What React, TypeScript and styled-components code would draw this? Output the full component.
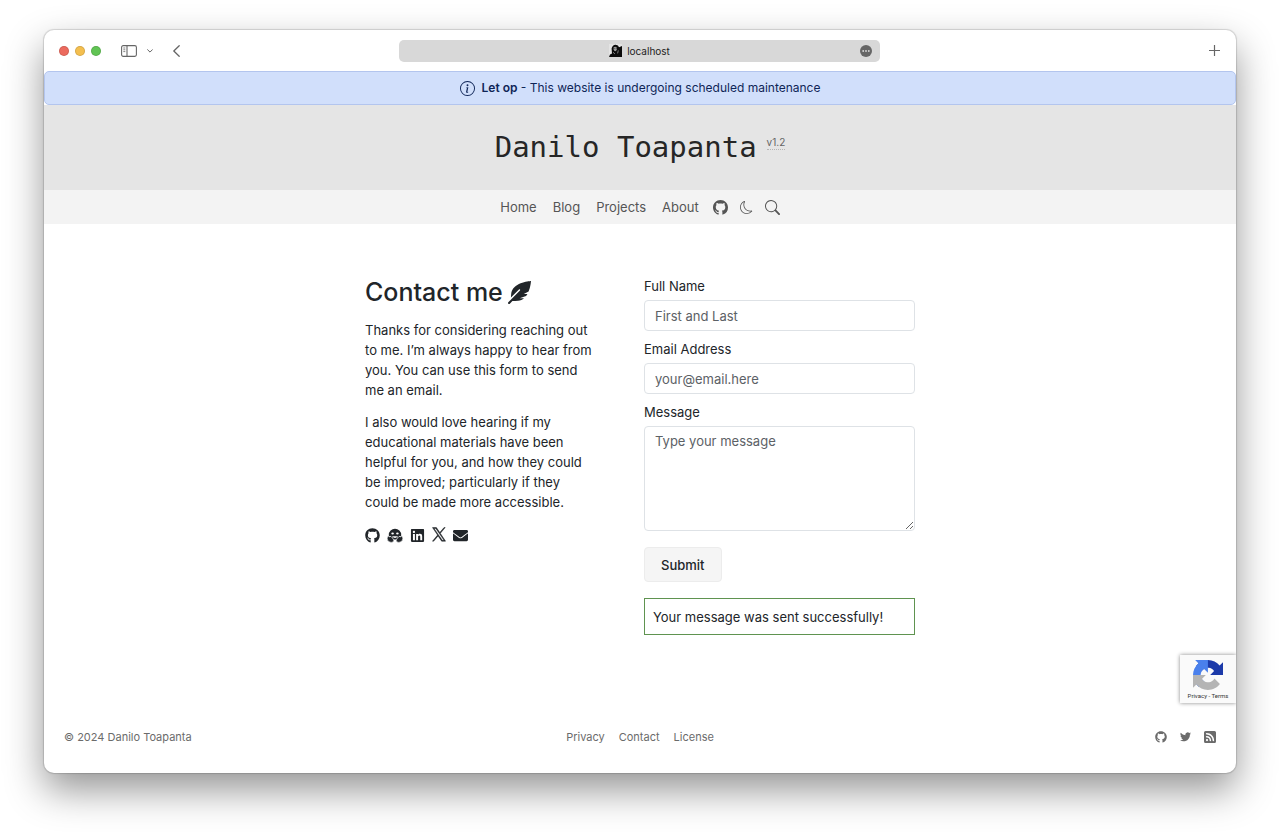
import React from "react";
import styled, { createGlobalStyle } from "styled-components";
import {
  BsGithub,
  BsInfoCircle,
  BsMoon,
  BsRssFill,
  BsSearch,
  BsTwitter,
} from "react-icons/bs";
import { FaEnvelope, FaFeatherAlt, FaGithub, FaLinkedin } from "react-icons/fa";

const GlobalStyle = createGlobalStyle`
  *, *::before, *::after { box-sizing: border-box; }
  body {
    margin: 0;
    background: #fff;
    color: #212529;
    font-family: Inter, "Liberation Sans", sans-serif;
    font-size: 13px;
    line-height: 20px;
  }
  h1, h2, p { margin: 0; font-weight: 400; }
  a { color: inherit; text-decoration: none; }
  button, input, textarea { font: inherit; color: inherit; }
  svg { display: block; }
`;

const Desktop = styled.div`
  display: flex;
  min-height: 100vh;
  padding: 30px 44px 59px;
`;

const Window = styled.div`
  position: relative;
  flex: 1;
  min-width: 0;
  display: flex;
  flex-direction: column;
  overflow: hidden;
  border-radius: 10px;
  background: #fff;
  box-shadow: 0 0 1px 1px rgba(0, 0, 0, 0.14), 0 17px 38px rgba(0, 0, 0, 0.42);
`;

const Toolbar = styled.div`
  display: grid;
  grid-template-columns: 1fr 481px 1fr;
  align-items: center;
  height: 41px;
  padding: 0 16px 0 15px;
  color: #666;
`;

const ToolbarGroup = styled.div`
  display: flex;
  align-items: center;
`;

const Lights = styled.div`
  display: flex;
  gap: 6px;
  margin-right: 20px;
`;

const Light = styled.span<{ $color: string }>`
  width: 10px;
  height: 10px;
  border-radius: 50%;
  border: 1px solid rgba(0, 0, 0, 0.12);
  background: ${(p) => p.$color};
`;

const ToolButton = styled.button<{ $left?: number }>`
  display: flex;
  padding: 0;
  margin-left: ${(p) => p.$left ?? 0}px;
  border: 0;
  background: none;
  color: #666;
`;

const EndButton = styled(ToolButton)`
  justify-self: end;
`;

const AddressBar = styled.div`
  display: grid;
  grid-template-columns: 1fr auto 1fr;
  align-items: center;
  height: 22px;
  padding: 0 8px;
  border-radius: 5px;
  background: #d8d8d8;
  color: #1d1d1d;
  font-size: 10px;
  line-height: 16px;
`;

const Address = styled.span`
  grid-column: 2;
  display: flex;
  align-items: center;
  gap: 5px;
`;

const Notice = styled.div`
  display: flex;
  align-items: center;
  justify-content: center;
  gap: 7px;
  height: 34px;
  border: 1px solid #b3c5ee;
  border-radius: 5px;
  background: #d1dffb;
  color: #0f2557;
  font-size: 12px;

  b { font-weight: 600; }
`;

const Banner = styled.header`
  display: flex;
  justify-content: center;
  gap: 10px;
  height: 85px;
  padding-top: 22px;
  background: #e5e5e5;
`;

const SiteTitle = styled.h1`
  color: #262626;
  font-family: "DejaVu Sans Mono", "Liberation Mono", monospace;
  font-size: 29px;
  line-height: 40px;
`;

const Version = styled.a`
  align-self: flex-start;
  margin-top: 8px;
  border-bottom: 1px dotted #b5b5b5;
  color: #666;
  font-size: 10px;
  line-height: 14px;
`;

const Nav = styled.nav`
  display: flex;
  align-items: center;
  justify-content: center;
  gap: 16px;
  height: 34px;
  background: #f3f3f3;
  color: #555;
`;

const NavIcons = styled.div`
  display: flex;
  align-items: center;
  gap: 12px;
  margin-left: -2px;
`;

const Main = styled.main`
  flex: 1;
  display: grid;
  grid-template-columns: 231px 271px;
  justify-content: center;
  align-items: start;
  gap: 48px;
  padding: 52px 20px 60px;
`;

const Intro = styled.section`
  display: flex;
  flex-direction: column;

  p { margin-bottom: 12px; }
`;

const Heading = styled.h2`
  display: flex;
  align-items: center;
  gap: 5px;
  margin-bottom: 12px;
  font-size: 25px;
  font-weight: 500;
  line-height: 32px;
`;

const Profiles = styled.div`
  display: flex;
  align-items: center;
  gap: 7px;
  padding-top: 3px;
`;

const ContactForm = styled.form`
  display: flex;
  flex-direction: column;
  align-items: stretch;
`;

const Label = styled.label`
  margin-bottom: 4px;
`;

const Field = styled.input`
  width: 100%;
  height: 31px;
  margin-bottom: 8px;
  padding: 4px 10px;
  border: 1px solid #dee2e6;
  border-radius: 4px;
  background: #fff;

  &::placeholder { color: #5c6166; opacity: 1; }
`;

const MessageField = styled(Field).attrs({ as: "textarea" })`
  display: block;
  height: 105px;
  margin-bottom: 16px;
  resize: vertical;
`;

const Submit = styled.button`
  align-self: flex-start;
  height: 35px;
  margin-bottom: 16px;
  padding: 0 16px;
  border: 1px solid #ececec;
  border-radius: 4px;
  background: #f5f5f5;
  font-weight: 500;
`;

const Success = styled.p`
  padding: 8px 8px 7px;
  border: 1px solid #5f9350;
`;

const Footer = styled.footer`
  display: grid;
  grid-template-columns: 1fr auto 1fr;
  align-items: center;
  height: 72px;
  padding: 0 20px;
  color: #6b6b6b;
  font-size: 11px;
`;

const FooterLinks = styled.nav`
  display: flex;
  gap: 14px;
`;

const FooterIcons = styled.div`
  display: flex;
  justify-self: end;
  gap: 13px;
`;

const CaptchaBadge = styled.aside`
  position: absolute;
  right: 0;
  bottom: 70px;
  display: flex;
  flex-direction: column;
  align-items: center;
  gap: 1px;
  width: 56px;
  height: 48px;
  padding-top: 5px;
  background: #fafafa;
  box-shadow: 0 0 4px #888;
  color: #333;
  font-family: Roboto, sans-serif;
  font-size: 6px;
  line-height: 10px;
`;

const SidebarGlyph = () => (
  <svg width="16" height="12" viewBox="0 0 16 12" fill="none" stroke="currentColor">
    <rect x=".6" y=".6" width="14.8" height="10.8" rx="1.6" strokeWidth="1.1" />
    <path d="M6 .6v10.8" strokeWidth="1.1" />
    <path d="M2.3 3h2M2.3 4.8h2M2.3 6.6h2" strokeWidth=".8" />
  </svg>
);

const Favicon = () => (
  <svg width="13" height="13" viewBox="0 0 13 13">
    <rect width="13" height="13" fill="#e4e4e4" />
    <path d="M0 13L1 10.5 3 9.5 2.6 4.5Q3.5.8 6.5.7T10 3.2L13 2V13Z" fill="#0c0c0c" />
    <path d="M4.6 3.2Q6.3 2.2 7.8 3.4V5.6Q7.3 7.2 6.2 7.2T4.6 5.5Z" fill="#9a9a9a" />
    <path d="M4.8 4.4h1M6.7 4.4h1" stroke="#222" strokeWidth=".6" />
    <path d="M4 8.2L6 10M9.3 6.4L8.6 9.4" stroke="#999" strokeWidth=".8" />
  </svg>
);

/* Solid hugging face: a round head with two raised hands */
const HuggingFace = () => (
  <svg width="16" height="15" viewBox="0 0 16 15">
    <path fill="currentColor" d="M8 .8a6.200 6.200 0 0 1 6.200 6.200v1.200H1.800V7A6.200 6.200 0 0 1 8 .8Z" />
    <path fill="currentColor" d="M4 8h8v3.500H4Z" />
    <g fill="#fff">
      <ellipse cx="5.600" cy="5.500" rx="1.300" ry="1" />
      <ellipse cx="10.400" cy="5.500" rx="1.300" ry="1" />
      <path d="M5.800 8.200h4.400Q9.900 10 8 10T5.800 8.200Z" />
    </g>
    <g fill="currentColor" stroke="#fff" strokeWidth=".6">
      <path d="M1.200 7.900L2.600 9l.4-1 1.300 1.200 1.200-.6.4 2.500 1 .7q.3 2.600-2.800 2.600Q.2 14.200.2 10.500.2 8.700 1.200 7.900Z" />
      <path d="M14.800 7.900L13.400 9l-.4-1-1.300 1.200-1.200-.6-.4 2.500-1 .7q-.3 2.600 2.800 2.600 3.900-.2 3.900-3.900 0-1.800-1-2.600Z" />
    </g>
  </svg>
);

const XLogo = () => (
  <svg width="14" height="17" viewBox="0 0 24 30" fill="currentColor">
    <path stroke="currentColor" strokeWidth=".9" d="M14.3 11.200L22.900 1h-2l-7.500 8.800L7.400 1H.5l9 13.300L.5 25h2l7.900-9.300 6.300 9.300h6.900ZM11.500 14.500l-.9-1.300L3.300 2.600h3.100l5.900 8.600.9 1.300 7.700 11.100h-3.100Z" />
  </svg>
);

export default function App() {
  return (
    <Desktop>
      <GlobalStyle />
      <Window>
        <Toolbar>
          <ToolbarGroup>
            <Lights>
              <Light $color="#ec6a5e" />
              <Light $color="#f4bf4f" />
              <Light $color="#61c454" />
            </Lights>
            <ToolButton aria-label="Show sidebar"><SidebarGlyph /></ToolButton>
            <ToolButton aria-label="Tab groups" $left={10}>
              <svg width="6" height="4" viewBox="0 0 6 4" fill="none" stroke="currentColor" strokeLinecap="round">
                <path d="M.6.7L3 3.1 5.4.7" />
              </svg>
            </ToolButton>
            <ToolButton aria-label="Back" $left={20}>
              <svg width="7" height="12" viewBox="0 0 7 12" fill="none" stroke="currentColor" strokeWidth="1.3" strokeLinecap="round" strokeLinejoin="round">
                <path d="M6.2.8L.8 6l5.400 5.200" />
              </svg>
            </ToolButton>
          </ToolbarGroup>
          <AddressBar>
            <Address><Favicon />localhost</Address>
            <EndButton aria-label="Page menu">
              <svg width="12" height="12" viewBox="0 0 12 12">
                <circle cx="6" cy="6" r="6" fill="#666" />
                <g fill="#d8d8d8"><circle cx="3.2" cy="6" r=".9" /><circle cx="6" cy="6" r=".9" /><circle cx="8.8" cy="6" r=".9" /></g>
              </svg>
            </EndButton>
          </AddressBar>
          <EndButton aria-label="New tab">
            <svg width="11" height="11" viewBox="0 0 11 11" stroke="currentColor" strokeWidth="1.2">
              <path d="M5.5 0v11M0 5.5h11" />
            </svg>
          </EndButton>
        </Toolbar>
        <Notice role="status">
          <BsInfoCircle size={15} />
          <span><b>Let op</b> - This website is undergoing scheduled maintenance</span>
        </Notice>
        <Banner>
          <SiteTitle>Danilo Toapanta</SiteTitle>
          <Version href="#version">v1.2</Version>
        </Banner>
        <Nav>
          <a href="#home">Home</a>
          <a href="#blog">Blog</a>
          <a href="#projects">Projects</a>
          <a href="#about">About</a>
          <NavIcons>
            <a href="#github" aria-label="GitHub"><BsGithub size={15} /></a>
            <a href="#theme" aria-label="Dark mode"><BsMoon size={13} /></a>
            <a href="#search" aria-label="Search"><BsSearch size={15} /></a>
          </NavIcons>
        </Nav>
        <Main>
          <Intro>
            <Heading>Contact me <FaFeatherAlt size={23} /></Heading>
            <p>
              Thanks for considering reaching out to me. I’m always happy to hear from you. You can
              use this form to send me an email.
            </p>
            <p>
              I also would love hearing if my educational materials have been helpful for you, and
              how they could be improved; particularly if they could be made more accessible.
            </p>
            <Profiles>
              <a href="#github" aria-label="GitHub"><FaGithub size={15} /></a>
              <a href="#huggingface" aria-label="Hugging Face"><HuggingFace /></a>
              <a href="#linkedin" aria-label="LinkedIn"><FaLinkedin size={15} /></a>
              <a href="#x" aria-label="X"><XLogo /></a>
              <a href="#mail" aria-label="Email"><FaEnvelope size={15} /></a>
            </Profiles>
          </Intro>
          <ContactForm onSubmit={(e) => e.preventDefault()}>
            <Label htmlFor="name">Full Name</Label>
            <Field id="name" type="text" placeholder="First and Last" />
            <Label htmlFor="email">Email Address</Label>
            <Field id="email" type="email" placeholder="your@email.here" />
            <Label htmlFor="message">Message</Label>
            <MessageField id="message" placeholder="Type your message" />
            <Submit type="submit">Submit</Submit>
            <Success role="status">Your message was sent successfully!</Success>
          </ContactForm>
        </Main>
        <Footer>
          <span>© 2024 Danilo Toapanta</span>
          <FooterLinks>
            <a href="#privacy">Privacy</a>
            <a href="#contact">Contact</a>
            <a href="#license">License</a>
          </FooterLinks>
          <FooterIcons>
            <a href="#github" aria-label="GitHub"><FaGithub size={12} /></a>
            <a href="#twitter" aria-label="Twitter"><BsTwitter size={11} /></a>
            <a href="#rss" aria-label="RSS"><BsRssFill size={12} /></a>
          </FooterIcons>
        </Footer>
        <CaptchaBadge>
          <svg width="30" height="30" viewBox="0 0 64 64">
            <path fill="#1c3aa9" d="M64 31.955l-.033-1.37V4.687l-7.16 7.16C50.948 4.674 42.033.093 32.05.093c-10.4 0-19.622 4.96-25.458 12.64l11.736 11.86a15.55 15.55 0 0 1 4.754-5.334c2.05-1.6 4.952-2.906 8.968-2.906.485 0 .86.057 1.135.163 4.976.393 9.288 3.14 11.828 7.124l-8.307 8.307L64 31.953" />
            <path fill="#4a80ec" d="M31.862.094l-1.37.033H4.594l7.16 7.16C4.58 13.147 0 22.06 0 32.046c0 10.4 4.96 19.622 12.64 25.458L24.5 45.768a15.55 15.55 0 0 1-5.334-4.754c-1.6-2.05-2.906-4.952-2.906-8.968 0-.485.057-.86.163-1.135.393-4.976 3.14-9.288 7.124-11.828l8.307 8.307L31.86.095" />
            <path fill="#b4b4b4" d="M.001 32.045l.033 1.37v25.898l7.16-7.16c5.86 7.173 14.774 11.754 24.76 11.754 10.4 0 19.622-4.96 25.458-12.64l-11.736-11.86a15.55 15.55 0 0 1-4.754 5.334c-2.05 1.6-4.952 2.906-8.968 2.906-.485 0-.86-.057-1.135-.163-4.976-.393-9.288-3.14-11.828-7.124l8.307-8.307c-10.522.04-22.4.066-27.295-.005" />
          </svg>
          <span><a href="#captcha-privacy">Privacy</a> - <a href="#captcha-terms">Terms</a></span>
        </CaptchaBadge>
      </Window>
    </Desktop>
  );
}
